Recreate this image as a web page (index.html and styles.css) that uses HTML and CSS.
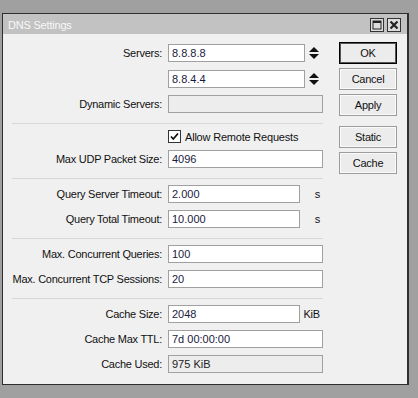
FILE: index.html
```html
<!DOCTYPE html>
<html lang="en">
<head>
  <meta charset="UTF-8" />
  <title>DNS Settings</title>
  <link rel="stylesheet" href="styles.css">
</head>
<body>
  <div class="window">
    <div class="titlebar">
      <span class="title">DNS Settings</span>
      <div class="title-btns">
        <span class="tbtn">
          <svg width="10" height="10" viewBox="0 0 10 10"><rect x="1" y="1" width="8" height="8" fill="none" stroke="#222" stroke-width="1"/><rect x="1" y="1" width="8" height="2" fill="#222"/></svg>
        </span>
        <span class="tbtn">
          <svg width="10" height="10" viewBox="0 0 10 10"><path d="M1.5 1.5 L8.5 8.5 M8.5 1.5 L1.5 8.5" stroke="#222" stroke-width="2.2"/></svg>
        </span>
      </div>
    </div>

    <div class="content">
      <div class="form">
        <div class="group">
          <div class="row first">
            <span class="label">Servers:</span>
            <div class="field short-spin">8.8.8.8</div>
            <span class="spin"><svg width="10" height="12" viewBox="0 0 10 12"><polygon points="0,5 5,0 10,5" fill="#111"/><polygon points="0,7 5,12 10,7" fill="#111"/></svg></span>
          </div>
          <div class="row">
            <span class="label"></span>
            <div class="field short-spin">8.8.4.4</div>
            <span class="spin"><svg width="10" height="12" viewBox="0 0 10 12"><polygon points="0,5 5,0 10,5" fill="#111"/><polygon points="0,7 5,12 10,7" fill="#111"/></svg></span>
          </div>
          <div class="row">
            <span class="label">Dynamic Servers:</span>
            <div class="field disabled"></div>
          </div>
        </div>

        <div class="sep"></div>

        <div class="group">
          <div class="row check-row">
            <span class="label"></span>
            <span class="checkbox"><svg width="11" height="11" viewBox="0 0 11 11"><path d="M2 5.5 L4.3 8 L9 2.5" fill="none" stroke="#111" stroke-width="1.8"/></svg></span>
            <span class="check-text">Allow Remote Requests</span>
          </div>
          <div class="row">
            <span class="label">Max UDP Packet Size:</span>
            <div class="field">4096</div>
          </div>
        </div>

        <div class="sep"></div>

        <div class="group">
          <div class="row">
            <span class="label">Query Server Timeout:</span>
            <div class="field short">2.000</div>
            <span class="unit">s</span>
          </div>
          <div class="row">
            <span class="label">Query Total Timeout:</span>
            <div class="field short">10.000</div>
            <span class="unit">s</span>
          </div>
        </div>

        <div class="sep"></div>

        <div class="group">
          <div class="row">
            <span class="label">Max. Concurrent Queries:</span>
            <div class="field">100</div>
          </div>
          <div class="row">
            <span class="label">Max. Concurrent TCP Sessions:</span>
            <div class="field">20</div>
          </div>
        </div>

        <div class="sep"></div>

        <div class="group">
          <div class="row">
            <span class="label">Cache Size:</span>
            <div class="field short">2048</div>
            <span class="unit">KiB</span>
          </div>
          <div class="row">
            <span class="label">Cache Max TTL:</span>
            <div class="field">7d 00:00:00</div>
          </div>
          <div class="row">
            <span class="label">Cache Used:</span>
            <div class="field disabled">975 KiB</div>
          </div>
        </div>
      </div>

      <div class="buttons">
        <div class="btn default">OK</div>
        <div class="btn">Cancel</div>
        <div class="btn">Apply</div>
        <div class="btn spaced">Static</div>
        <div class="btn">Cache</div>
      </div>
    </div>
  </div>
</body>
</html>
```

FILE: styles.css
```css
body {
  margin: 0;
  padding: 13px 0 0 2px;
  background: #a0a0a0;
  font-family: "Liberation Sans", Arial, sans-serif;
  font-size: 11px;
  color: #111;
}
.window {
  width: 404px;
  border: 1px solid #2e2e2e;
  border-right-width: 2px;
  background: #f0f0f0;
}
.titlebar {
  height: 20px;
  background: #c2c2c2;
  display: flex;
  align-items: center;
  justify-content: space-between;
  padding: 0 6px 0 5px;
}
.title {
  color: #f8f8f8;
  letter-spacing: -0.2px;
  padding-top: 1px;
}
.title-btns {
  display: flex;
  gap: 3px;
  padding-top: 1px;
}
.tbtn {
  width: 12px;
  height: 12px;
  border: 1px solid #333;
  background: #dcdcdc;
  display: flex;
  align-items: center;
  justify-content: center;
}
.content {
  display: flex;
  align-items: flex-start;
}
.form {
  width: 320px;
  padding: 10px 0 11px;
}
.group {
  display: flex;
  flex-direction: column;
  gap: 7px;
}
.row {
  display: flex;
  align-items: center;
  height: 18px;
}
.row.first {
  margin-bottom: 1px;
}
.label {
  width: 159px;
  margin-right: 6px;
  text-align: right;
  letter-spacing: -0.25px;
  white-space: nowrap;
}
.field {
  box-sizing: border-box;
  width: 155px;
  height: 18px;
  border: 1px solid #a0a0a0;
  background: #fff;
  color: #1a1a40;
  padding: 0 3px;
  line-height: 16px;
  white-space: nowrap;
}
.field.short {
  width: 132px;
}
.field.short-spin {
  width: 137px;
}
.field.disabled {
  background: #ededed;
  color: #222;
}
.spin {
  width: 18px;
  display: flex;
  justify-content: center;
}
.spin svg {
  display: block;
}
.unit {
  width: 23px;
  text-align: right;
  padding-right: 3px;
  box-sizing: border-box;
  letter-spacing: -0.2px;
}
.check-row {
  height: 13px;
}
.checkbox {
  box-sizing: border-box;
  width: 13px;
  height: 13px;
  border: 1px solid #333;
  background: #fff;
  display: flex;
  align-items: center;
  justify-content: center;
}
.check-text {
  margin-left: 4px;
  letter-spacing: -0.2px;
}
.sep {
  height: 1px;
  background: #d8d8d8;
  margin: 10px 0 6px 9px;
}
.buttons {
  width: 58px;
  margin-left: 16px;
  padding-top: 8px;
  display: flex;
  flex-direction: column;
  gap: 4px;
}
.btn {
  box-sizing: border-box;
  height: 22px;
  border: 1px solid #9c9c9c;
  background: #ececec;
  box-shadow: inset 0 0 0 1px #fafafa;
  text-align: center;
  line-height: 20px;
  letter-spacing: -0.25px;
  color: #111;
}
.btn.default {
  border-color: #000;
  box-shadow: inset 0 0 0 1px #555;
}
.btn.spaced {
  margin-top: 6px;
}
```
